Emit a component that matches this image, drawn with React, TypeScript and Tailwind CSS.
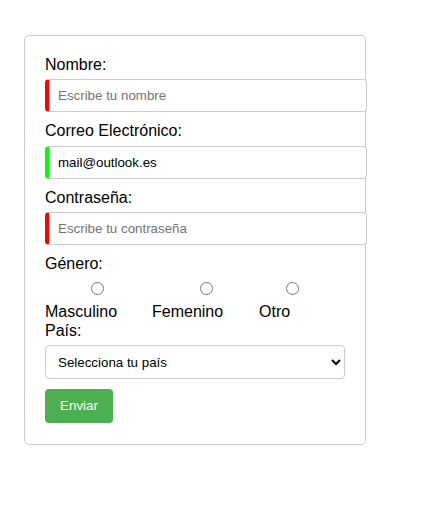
import React from "react";

export default function App() {
  const font = { fontFamily: '"Liberation Sans", Arial, sans-serif' };
  return (
    <div className="min-h-[505px] w-[447px] bg-white pt-[35px] pl-[24px] text-black" style={font}>
      <form
        className="box-border w-[342px] rounded-[5px] border border-[#cccccc] px-[20px] pt-[20px] pb-[21px]"
        onSubmit={(e) => e.preventDefault()}
      >
        <label className="block text-[16px] leading-[18.4px] mb-[5px]">Nombre:</label>
        <input
          type="text"
          placeholder="Escribe tu nombre"
          className="box-border mb-[10px] block h-[33px] w-[322px] rounded-[4px] border border-l-4 border-[#cccccc] border-l-[#ff0000] bg-white pl-[9px] pr-[8px] text-[13.33px] text-black outline-none placeholder:text-[#757575]"
        />
        <label className="block text-[16px] leading-[18.4px] mb-[5px]">Correo Electrónico:</label>
        <input
          type="email"
          defaultValue="mail@outlook.es"
          className="box-border mb-[10px] block h-[33px] w-[322px] rounded-[4px] border border-l-4 border-[#cccccc] border-l-[#00ff00] bg-white pl-[9px] pr-[8px] text-[13.33px] text-black outline-none"
        />
        <label className="block text-[16px] leading-[18.4px] mb-[5px]">Contraseña:</label>
        <input
          type="password"
          placeholder="Escribe tu contraseña"
          className="box-border mb-[10px] block h-[33px] w-[322px] rounded-[4px] border border-l-4 border-[#cccccc] border-l-[#ff0000] bg-white pl-[9px] pr-[8px] text-[13.33px] text-black outline-none placeholder:text-[#757575]"
        />
        <label className="block text-[16px] leading-[18.4px] mb-[5px]">Género:</label>
        <div className="flex">
          <div className="flex w-[107px] flex-col">
            <input type="radio" name="genero" className="ml-[46px] mt-[3.6px] mb-[8px] h-[13px] w-[13px]" />
            <span className="text-[16px] leading-[18.4px]">Masculino</span>
          </div>
          <div className="flex w-[107px] flex-col">
            <input type="radio" name="genero" className="ml-[48px] mt-[3.6px] mb-[8px] h-[13px] w-[13px]" />
            <span className="text-[16px] leading-[18.4px]">Femenino</span>
          </div>
          <div className="flex flex-col">
            <input type="radio" name="genero" className="ml-[27px] mt-[3.6px] mb-[8px] h-[13px] w-[13px]" />
            <span className="text-[16px] leading-[18.4px]">Otro</span>
          </div>
        </div>
        <label className="block text-[16px] leading-[18.4px] mb-[5px]">País:</label>
        <select
          defaultValue=""
          className="box-border mb-[10px] block h-[34px] w-[300px] rounded-[4px] border border-[#cccccc] bg-white pl-[8px] pr-[2px] text-[13.33px] text-black outline-none"
        >
          <option value="">Selecciona tu país</option>
          <option value="es">España</option>
          <option value="mx">México</option>
        </select>
        <button
          type="submit"
          className="block h-[34px] w-[68px] rounded-[4px] bg-[#4caf50] text-[13.33px] text-white"
        >
          Enviar
        </button>
      </form>
    </div>
  );
}
